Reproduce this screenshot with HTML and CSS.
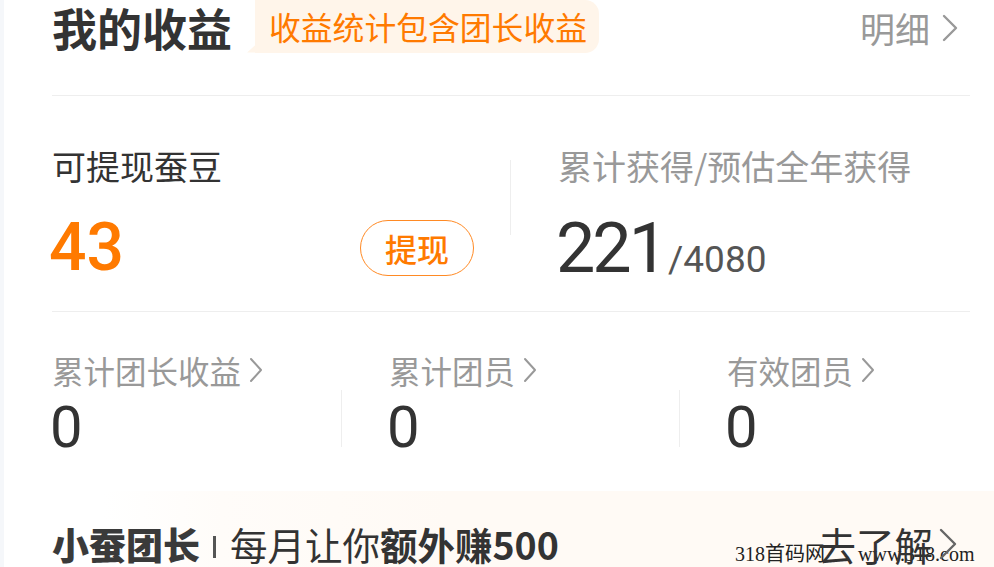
FILE: index.html
```html
<!DOCTYPE html>
<html lang="zh-CN">
<head>
<meta charset="utf-8">
<title>我的收益</title>
<link rel="stylesheet" href="styles.css">
</head>
<body>
<div class="card">
  <header class="head">
    <h1 class="title">我的收益</h1>
    <div class="bubble">收益统计包含团长收益</div>
    <a class="more">明细<svg class="chev chev-lg" viewBox="0 0 16 28"><path d="M2 2 L14 14 L2 26" fill="none" stroke="currentColor" stroke-width="2.4" stroke-linecap="round" stroke-linejoin="round"/></svg></a>
  </header>

  <section class="stats">
    <div class="stat-left">
      <div class="label dark">可提现蚕豆</div>
      <div class="value-row">
        <span class="num-orange">43</span>
        <button class="withdraw">提现</button>
      </div>
    </div>
    <div class="vsep"></div>
    <div class="stat-right">
      <div class="label">累计获得/预估全年获得</div>
      <div class="value-row">
        <span class="num-big">221</span><span class="num-sub">/4080</span>
      </div>
    </div>
  </section>

  <section class="metrics">
    <div class="metric first">
      <div class="m-label">累计团长收益<svg class="chev chev-sm" viewBox="0 0 14 26"><path d="M2 2 L12 13 L2 24" fill="none" stroke="currentColor" stroke-width="2" stroke-linecap="round" stroke-linejoin="round"/></svg></div>
      <div class="m-val">0</div>
    </div>
    <div class="msep"></div>
    <div class="metric">
      <div class="m-label">累计团员<svg class="chev chev-sm" viewBox="0 0 14 26"><path d="M2 2 L12 13 L2 24" fill="none" stroke="currentColor" stroke-width="2" stroke-linecap="round" stroke-linejoin="round"/></svg></div>
      <div class="m-val">0</div>
    </div>
    <div class="msep"></div>
    <div class="metric last">
      <div class="m-label">有效团员<svg class="chev chev-sm" viewBox="0 0 14 26"><path d="M2 2 L12 13 L2 24" fill="none" stroke="currentColor" stroke-width="2" stroke-linecap="round" stroke-linejoin="round"/></svg></div>
      <div class="m-val">0</div>
    </div>
  </section>

  <section class="banner">
    <div class="slogan">
      <span class="brand">小蚕团长</span><span class="bar"></span><span class="reg">每月让你</span><b class="strong">额外赚500</b>
    </div>
    <a class="learn">去了解<svg class="chev chev-md" viewBox="0 0 18 32"><path d="M2 2 L16 16 L2 30" fill="none" stroke="currentColor" stroke-width="2.4" stroke-linecap="round" stroke-linejoin="round"/></svg></a>
    <div class="watermark"><span>318首码网</span><span class="wm-url">www.318.com</span></div>
  </section>
</div>
</body>
</html>
```

FILE: styles.css
```css
* { box-sizing: border-box; }
html, body { margin: 0; padding: 0; }
body {
  background: #f5f7fa;
  font-family: "Noto Sans CJK SC", "Noto Sans", sans-serif;
  width: 994px;
  height: 567px;
  overflow: hidden;
}
.card {
  margin-left: 4px;
  background: #fff;
  height: 567px;
  padding-left: 48px;
  position: relative;
  overflow: hidden;
}

/* header */
.head {
  display: flex;
  align-items: center;
  height: 96px;
  padding-bottom: 40px;
  margin-right: 24px;
  border-bottom: 1px solid #eeeeee;
}
.title {
  margin: 0;
  font-size: 45px;
  line-height: 56px;
  font-weight: 700;
  color: #333;
  white-space: nowrap;
}
.bubble {
  position: relative;
  margin-left: 23px;
  height: 53px;
  margin-top: -3px;
  padding: 0 12px 0 14px;
  background: #fff5ea;
  border-radius: 0 14px 14px 0;
  color: #ff7a00;
  font-size: 31.8px;
  line-height: 53px;
  white-space: nowrap;
}
.bubble::before {
  content: "";
  position: absolute;
  left: -8px;
  bottom: 0;
  width: 18px;
  height: 16px;
  background: #fff5ea;
  clip-path: polygon(0 100%, 100% 0, 100% 100%);
}
.more {
  margin-left: auto;
  display: flex;
  align-items: center;
  color: #999;
  font-size: 35px;
  line-height: 56px;
  margin-right: 12px;
  white-space: nowrap;
}
.chev { display: block; flex: none; }
.chev-lg { width: 16px; height: 28px; margin-left: 12px; }
.chev-sm { width: 14px; height: 26px; margin-left: 8px; }
.chev-md { width: 18px; height: 32px; margin-left: 6px; }

/* stats */
.stats {
  display: flex;
  align-items: flex-start;
  height: 216px;
  padding-top: 50px;
  margin-right: 24px;
  border-bottom: 1px solid #eeeeee;
}
.stat-left { width: 422px; flex: none; }
.label {
  font-size: 34px;
  line-height: 40px;
  color: #999;
  white-space: nowrap;
}
.label.dark { color: #333; }
.value-row {
  margin-top: 30px;
  height: 64px;
  display: flex;
  align-items: center;
}
.stat-left .value-row { justify-content: space-between; }
.num-orange {
  font-family: Roboto, "Noto Sans", sans-serif;
  font-size: 66px;
  font-weight: 500;
  color: #ff7a00;
  line-height: 64px;
  margin-left: -3px;
}
.withdraw {
  width: 114px;
  height: 56px;
  border: 1.5px solid #ff8a24;
  border-radius: 28px;
  background: #fff;
  color: #ff7a00;
  font-family: "Noto Sans CJK SC", sans-serif;
  font-size: 32px;
  font-weight: 500;
  padding: 0;
  line-height: 52px;
}
.vsep {
  flex: none;
  width: 1px;
  height: 75px;
  margin: 14px 0 0 36px;
  background: #eeeeee;
}
.stat-right { padding-left: 47px; }
.stat-right .value-row { align-items: baseline; }
.num-big {
  font-family: Roboto, "Noto Sans", sans-serif;
  font-size: 70px;
  font-weight: 400;
  color: #333;
  line-height: 64px;
  letter-spacing: -3px;
  margin-left: -2px;
}
.num-sub {
  font-family: Roboto, "Noto Sans", sans-serif;
  font-size: 37px;
  color: #555;
  margin-left: 3px;
}

/* metrics */
.metrics {
  display: flex;
  padding-top: 38px;
  height: 179px;
}
.metric { padding-left: 47px; width: 337px; flex: none; }
.metric.first { padding-left: 0; width: 289px; }
.metric.last { width: auto; flex: 1; }
.m-label {
  display: flex;
  align-items: center;
  font-size: 31.5px;
  line-height: 40px;
  color: #999;
  white-space: nowrap;
}
.m-val {
  margin-top: 8px;
  font-family: Roboto, "Noto Sans", sans-serif;
  font-size: 58px;
  line-height: 58px;
  color: #333;
  margin-left: -2px;
}
.msep {
  flex: none;
  width: 1px;
  height: 57px;
  margin-top: 40px;
  background: #eeeeee;
}

/* banner */
.banner {
  position: relative;
  margin-left: -48px;
  padding-left: 48px;
  padding-top: 29px;
  height: 77px;
  display: flex;
  align-items: flex-start;
  background: linear-gradient(90deg, #ffffff 0%, #ffffff 10%, #fffcf9 22%, #fffaf5 45%, #fffaf5 100%);
}
.slogan {
  display: flex;
  align-items: center;
  font-size: 37.5px;
  line-height: 48px;
  color: #333;
  white-space: nowrap;
}
.brand {
  font-size: 37px;
  font-weight: 900;
  color: #3a3a3a;
}
.bar {
  display: inline-block;
  width: 3px;
  height: 22px;
  background: #555;
  margin: 6px 14px 0 13px;
}
.reg { font-weight: 400; }
.strong { font-weight: 700; }
.learn {
  margin-left: auto;
  margin-right: 37px;
  display: flex;
  align-items: center;
  font-size: 38.5px;
  line-height: 48px;
  color: #333;
  position: relative;
  z-index: 2;
  white-space: nowrap;
}
.learn .chev { color: #666; }
.watermark {
  position: absolute;
  left: 731px;
  top: 50px;
  font-family: "Liberation Serif", "Noto Sans CJK SC", serif;
  font-size: 20px;
  line-height: 26px;
  color: #222;
  white-space: nowrap;
  z-index: 1;
}
.wm-url { margin-left: 33px; }
```
